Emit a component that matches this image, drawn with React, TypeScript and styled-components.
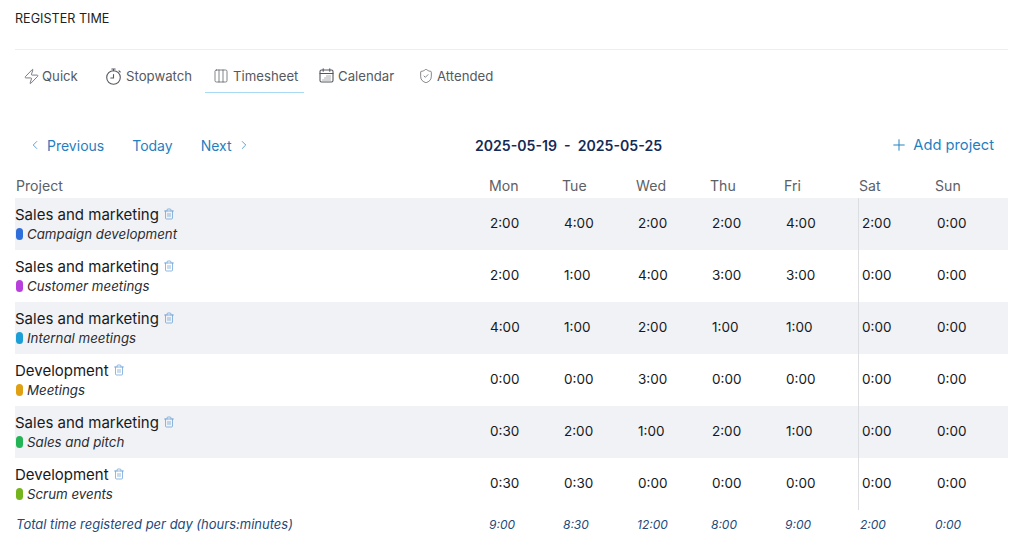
import React from "react";
import styled, { createGlobalStyle } from "styled-components";
import { ChevronLeft, ChevronRight, Columns3, Plus, ShieldCheck, Trash2, Zap } from "lucide-react";

const GRID = "475px 74px 74px 74px 74px 73px 78px 71px";

const Global = createGlobalStyle`
  html, body { margin: 0; padding: 0; background: #fff; }
  body { font-family: Inter, "Liberation Sans", sans-serif; color: #111; }
`;

const Page = styled.div`
  width: 1024px;
  height: 552px;
  box-sizing: border-box;
  padding: 0 16px 0 15px;
  overflow: hidden;
`;
const Title = styled.h1`
  margin: 0;
  height: 50px;
  box-sizing: border-box;
  padding-top: 11px;
  font-size: 12.6px;
  line-height: 16px;
  font-weight: 400;
  color: #1d1f22;
  border-bottom: 1px solid #eceef0;
`;
const Tabs = styled.nav`
  display: flex;
  gap: 7px;
  height: 43px;
`;
const Tab = styled.a<{ $w: number; $gap?: number; $active?: boolean }>`
  width: ${(p) => p.$w}px;
  box-sizing: border-box;
  padding: 17px 0 0 8px;
  display: flex;
  align-items: flex-start;
  gap: ${(p) => p.$gap ?? 4}px;
  font-size: 13.2px;
  line-height: 18px;
  color: #55595f;
  white-space: nowrap;
  border-bottom: 1px solid ${(p) => (p.$active ? "#a9daf3" : "transparent")};
  svg { flex: none; margin-top: 1px; color: #55595f; }
`;
const Toolbar = styled.div`
  display: flex;
  align-items: center;
  height: 20px;
  margin-top: 42px;
  padding-left: 13px;
`;
const NavGroup = styled.div`
  display: flex;
  align-items: center;
  width: 447px;
`;
const NavLink = styled.a<{ $ml?: number }>`
  display: flex;
  align-items: center;
  gap: 5px;
  margin-left: ${(p) => p.$ml ?? 0}px;
  font-size: 14px;
  color: #1f7fc0;
  white-space: nowrap;
  svg { color: #2f86c4; }
`;
const Dates = styled.div`
  font-size: 14.1px;
  font-weight: 600;
  color: #152a55;
  white-space: pre;
`;
const Add = styled(NavLink)`
  margin-left: auto;
  margin-right: 14px;
  font-size: 14.7px;
  svg { color: #1f7fc0; }
`;
const Head = styled.div`
  display: grid;
  grid-template-columns: ${GRID};
  height: 22px;
  margin-top: 19px;
  margin-bottom: 2px;
  align-items: center;
  font-size: 14.1px;
  color: #5c6066;
`;
const Shifted = styled.span<{ $x: number }>`
  margin-left: ${(p) => p.$x}px;
`;
const Row = styled.div<{ $shaded: boolean }>`
  display: grid;
  grid-template-columns: ${GRID};
  height: 52px;
  align-items: stretch;
  background: ${(p) => (p.$shaded ? "#f1f2f5" : "#fff")};
`;
const Info = styled.div`
  display: flex;
  flex-direction: column;
  padding-top: 7px;
`;
const ProjectLine = styled.div`
  display: flex;
  align-items: center;
  gap: 4px;
  height: 18px;
  font-size: 15px;
  color: #17191c;
  svg { color: #5f9bd6; margin-top: -1px; }
`;
const TaskLine = styled.div`
  display: flex;
  align-items: center;
  gap: 4px;
  height: 18px;
  margin-top: 2px;
  padding-left: 1px;
  font-size: 13.3px;
  font-style: italic;
  color: #2a2d31;
`;
const Dot = styled.i<{ $color: string }>`
  width: 7px;
  height: 12px;
  border-radius: 3.5px;
  background: ${(p) => p.$color};
`;
const Cell = styled.div<{ $pad?: number; $divider?: boolean }>`
  display: flex;
  align-items: center;
  padding: 0 0 2px ${(p) => p.$pad ?? 0}px;
  font-size: 13.5px;
  color: #17191c;
  ${(p) => (p.$divider ? "border-right: 1px solid #dcdee2;" : "")}
`;
const Total = styled.div`
  display: grid;
  grid-template-columns: ${GRID};
  height: 28px;
  align-items: center;
  font-size: 12px;
  font-style: italic;
  color: #234a7a;
`;
const TotalLabel = styled.span`
  margin-left: 1px;
  font-size: 13px;
`;

const rows = [
  { project: "Sales and marketing", task: "Campaign development", color: "#2f6fdc", times: ["2:00", "4:00", "2:00", "2:00", "4:00", "2:00", "0:00"] },
  { project: "Sales and marketing", task: "Customer meetings", color: "#b93fdc", times: ["2:00", "1:00", "4:00", "3:00", "3:00", "0:00", "0:00"] },
  { project: "Sales and marketing", task: "Internal meetings", color: "#1c9fd6", times: ["4:00", "1:00", "2:00", "1:00", "1:00", "0:00", "0:00"] },
  { project: "Development", task: "Meetings", color: "#dfa014", times: ["0:00", "0:00", "3:00", "0:00", "0:00", "0:00", "0:00"] },
  { project: "Sales and marketing", task: "Sales and pitch", color: "#22b455", times: ["0:30", "2:00", "1:00", "2:00", "1:00", "0:00", "0:00"] },
  { project: "Development", task: "Scrum events", color: "#74b51e", times: ["0:30", "0:30", "0:00", "0:00", "0:00", "0:00", "0:00"] },
];
const days = ["Mon", "Tue", "Wed", "Thu", "Fri", "Sat", "Sun"];
const dayShift = [-1, -2, -2, -2, -2, 0, -2];
const totals = ["9:00", "8:30", "12:00", "8:00", "9:00", "2:00", "0:00"];
const totalShift = [-1, -1, -1, -1, -1, 1, -2];

const Stopwatch = () => (
  <svg width="17" height="17" viewBox="0 0 17 17" fill="none" stroke="currentColor" strokeWidth="1.1" strokeLinecap="round">
    <circle cx="8.5" cy="9.5" r="6.8" />
    <path d="M6.8 1h3.4M8.5 1v1.7M14 2.8l1.2 1.2M8.5 6.5v3.5H5.8" />
  </svg>
);
const CalendarIcon = () => (
  <svg width="15" height="15" viewBox="0 0 15 15" fill="none" stroke="currentColor" strokeWidth="1.1" strokeLinecap="round">
    <rect x="1" y="2" width="13" height="12" rx="1.5" />
    <path d="M1 5.5h13M4.2 .8v2.4M10.8 .8v2.4" />
    <path d="M7.5 8h4M5.5 10h6M3.5 12h8" stroke="#a9acb0" />
  </svg>
);

export default function App() {
  return (
    <Page>
      <Global />
      <Title>REGISTER TIME</Title>
      <Tabs>
        <Tab $w={75} $gap={2}><Zap size={17} strokeWidth={1.1} />Quick</Tab>
        <Tab $w={101}><Stopwatch />Stopwatch</Tab>
        <Tab $w={99} $active><Columns3 size={16} strokeWidth={1.1} />Timesheet</Tab>
        <Tab $w={92}><CalendarIcon />Calendar</Tab>
        <Tab $w={100} $gap={3}><ShieldCheck size={16} strokeWidth={1.1} />Attended</Tab>
      </Tabs>
      <Toolbar>
        <NavGroup>
          <NavLink><ChevronLeft size={14} strokeWidth={1.3} />Previous</NavLink>
          <NavLink $ml={28}>Today</NavLink>
          <NavLink $ml={28}>Next<ChevronRight size={14} strokeWidth={1.3} /></NavLink>
        </NavGroup>
        <Dates>{"2025-05-19  -  2025-05-25"}</Dates>
        <Add><Plus size={18} strokeWidth={1.3} />Add project</Add>
      </Toolbar>
      <Head>
        <Shifted $x={1}>Project</Shifted>
        {days.map((d, j) => (
          <Shifted key={d} $x={dayShift[j]}>{d}</Shifted>
        ))}
      </Head>
      {rows.map((r, i) => (
        <Row key={r.task} $shaded={i % 2 === 0}>
          <Info>
            <ProjectLine>{r.project}<Trash2 size={12} strokeWidth={1.4} /></ProjectLine>
            <TaskLine><Dot $color={r.color} />{r.task}</TaskLine>
          </Info>
          {r.times.map((t, j) => (
            <Cell key={j} $divider={j === 4} $pad={j === 5 ? 3 : 0}>{t}</Cell>
          ))}
        </Row>
      ))}
      <Total>
        <TotalLabel>Total time registered per day (hours:minutes)</TotalLabel>
        {totals.map((t, j) => (
          <Shifted key={j} $x={totalShift[j]}>{t}</Shifted>
        ))}
      </Total>
    </Page>
  );
}
